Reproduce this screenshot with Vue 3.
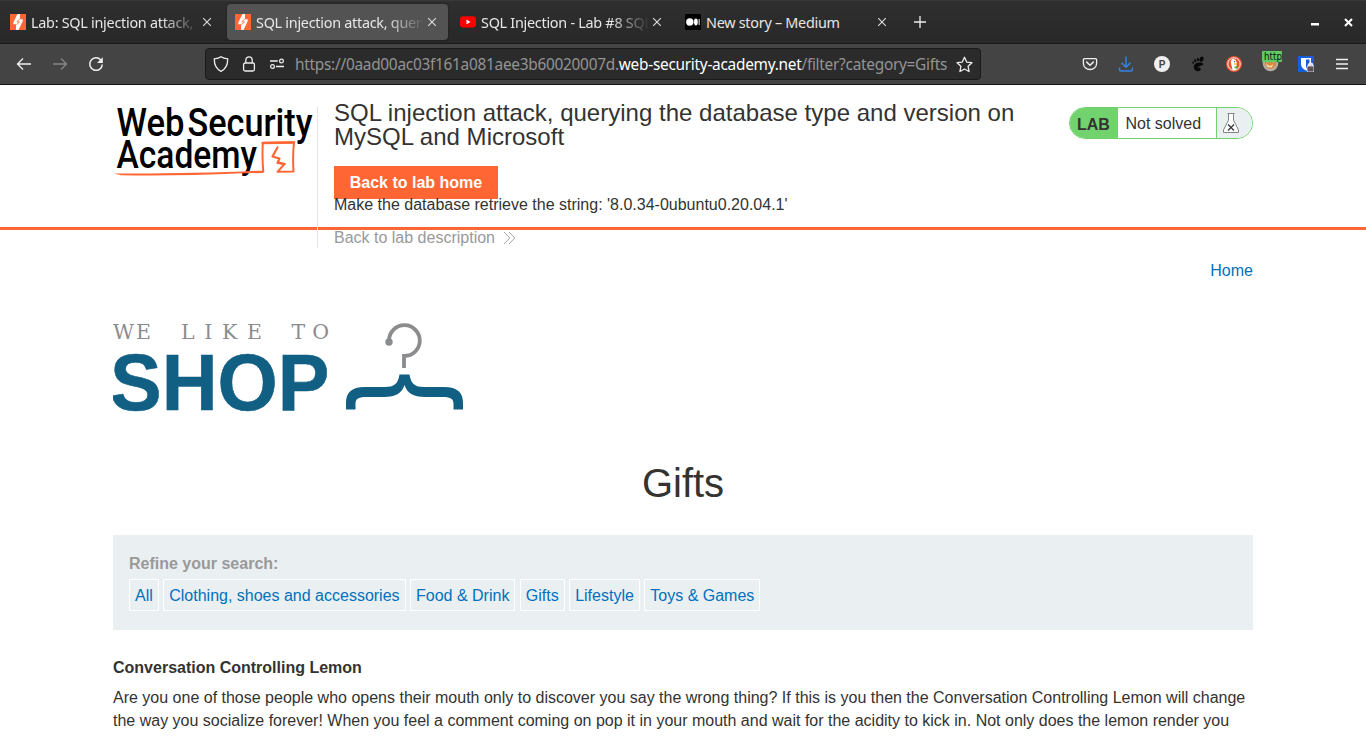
<script setup>
const tabs = [
  { title: 'Lab: SQL injection attack, q', icon: 'burp' },
  { title: 'SQL injection attack, query', icon: 'burp', active: true },
  { title: 'SQL Injection - Lab #8 SQL', icon: 'youtube' },
  { title: 'New story – Medium', icon: 'medium', full: true },
]
const filters = ['All', 'Clothing, shoes and accessories', 'Food & Drink', 'Gifts', 'Lifestyle', 'Toys & Games']
</script>

<template>
  <div class="window">
    <div class="tabbar">
      <div v-for="(t, i) in tabs" :key="i" class="tab" :class="{ active: t.active }">
        <svg class="favicon" viewBox="0 0 16 16" width="16" height="16">
          <template v-if="t.icon === 'burp'">
            <rect width="16" height="16" fill="#ff6633" />
            <path d="M7.500 0H10V5.200H12.700V7.200L8.500 16H6V10.300H3.300V8.500Z" fill="#fff" />
            <path d="M9.800 5L6.800 7.700L9.500 8L6.300 10.600" fill="none" stroke="#ff6633" stroke-width=".8" />
          </template>
          <template v-else-if="t.icon === 'youtube'">
            <rect y="2.300" width="16" height="11.200" rx="3" fill="#f00" />
            <path d="M6.500 5.500L10.600 7.900L6.500 10.300Z" fill="#fff" />
          </template>
          <template v-else>
            <rect width="16" height="16" rx="1" fill="#000" />
            <circle cx="4.800" cy="8" r="3.700" fill="#fff" />
            <ellipse cx="10.900" cy="8" rx="1.900" ry="3.400" fill="#fff" />
            <rect x="13.600" y="5" width="1.100" height="6" fill="#ddd" />
          </template>
        </svg>
        <span class="tab-title" :class="{ full: t.full }">{{ t.title }}</span>
        <svg class="tab-close" viewBox="0 0 10 10" width="10" height="10"><path d="M1.200 1.200L8.800 8.800M8.800 1.200L1.200 8.800" stroke="#dedede" stroke-width="1.100" /></svg>
      </div>
      <svg class="newtab" viewBox="0 0 12 12" width="12" height="12"><path d="M6 0V12M0 6H12" stroke="#eee" stroke-width="1.300" /></svg>
      <div class="wincontrols">
        <svg viewBox="0 0 8 3" width="8" height="3"><rect width="8" height="2.500" fill="#fff" /></svg>
        <svg viewBox="0 0 9 9" width="9" height="9"><path d="M1 1L8 8M8 1L1 8" stroke="#fff" stroke-width="2" /></svg>
      </div>
    </div>

    <div class="toolbar">
      <div class="nav">
        <svg viewBox="0 0 16 16" width="16" height="16"><path d="M15 8H1.500M7 2.500L1.500 8L7 13.500" fill="none" stroke="#f0f0f0" stroke-width="1.300" /></svg>
        <svg viewBox="0 0 16 16" width="16" height="16"><path d="M1 8H14.500M9 2.500L14.500 8L9 13.500" fill="none" stroke="#858585" stroke-width="1.300" /></svg>
        <svg viewBox="0 0 16 16" width="16" height="16"><path d="M12.700 3.800A6.300 6.300 0 1 0 14.300 8.500" fill="none" stroke="#f0f0f0" stroke-width="1.500" /><path d="M14.800 1.200V7H9Z" fill="#f0f0f0" /></svg>
      </div>
      <div class="urlbar">
        <svg viewBox="0 0 16 16" width="16" height="16"><path d="M8 .7C10 2.200 12.500 2.700 14.700 2.900C14.800 8.500 13.400 12.800 8 15.300C2.600 12.800 1.200 8.500 1.300 2.900C3.500 2.700 6 2.200 8 .7Z" fill="none" stroke="#eee" stroke-width="1.300" /></svg>
        <svg viewBox="0 0 16 16" width="16" height="16"><rect x="2.600" y="7" width="10.800" height="8" rx="1.500" fill="none" stroke="#eee" stroke-width="1.300" /><path d="M4.800 7V4A3.200 3.200 0 0 1 11.200 4V7" fill="none" stroke="#eee" stroke-width="1.300" /></svg>
        <svg viewBox="0 0 16 16" width="16" height="16"><path d="M1 5H8.800M7 10.500H15" stroke="#eee" stroke-width="1.300" /><circle cx="12.500" cy="5" r="1.900" fill="none" stroke="#eee" stroke-width="1.200" /><circle cx="3.500" cy="10.500" r="1.900" fill="none" stroke="#eee" stroke-width="1.200" /></svg>
        <span class="url">https://0aad00ac03f161a081aee3b60020007d.<b>web-security-academy.net</b>/filter?category=Gifts</span>
        <svg class="star" viewBox="0 0 16 16" width="17" height="17"><path d="M8 1.200L10.100 5.700L15 6.300L11.400 9.700L12.300 14.600L8 12.200L3.700 14.600L4.600 9.700L1 6.300L5.900 5.700Z" fill="none" stroke="#eee" stroke-width="1.200" stroke-linejoin="round" /></svg>
      </div>
      <div class="exts">
        <svg viewBox="0 0 16 16" width="16" height="16"><path d="M2.500 2.600H13.500Q14.600 2.600 14.600 3.700V7.500A6.600 6 0 0 1 1.400 7.500V3.700Q1.400 2.600 2.500 2.600Z" fill="none" stroke="#eee" stroke-width="1.300" /><path d="M4.700 6.100L8 9.200L11.300 6.100" fill="none" stroke="#eee" stroke-width="1.500" stroke-linecap="round" /></svg>
        <svg viewBox="0 0 16 16" width="16" height="16"><path d="M8 .5V11M3.500 6.800L8 11.200L12.500 6.800M1.500 11.500V13.200Q1.500 15 3.300 15H12.700Q14.500 15 14.500 13.200V11.500" fill="none" stroke="#3584e4" stroke-width="1.400" /></svg>
        <svg viewBox="0 0 16 16" width="16" height="16"><circle cx="8" cy="8" r="8" fill="#f0f0f0" /><text x="8" y="11.600" text-anchor="middle" class="p-letter">P</text></svg>
        <svg viewBox="0 0 16 16" width="16" height="16"><g fill="#080808"><ellipse cx="11.500" cy="3.200" rx="1.900" ry="2.700" transform="rotate(25 11.500 3.200)" /><ellipse cx="7.900" cy="3.500" rx="1.100" ry="1.700" /><ellipse cx="5.200" cy="4.700" rx="1" ry="1.500" transform="rotate(-15 5.200 4.700)" /><ellipse cx="3.100" cy="6.600" rx=".8" ry="1.200" transform="rotate(-25 3.100 6.600)" /><path d="M12.800 7.200C10 5.900 4.800 6.500 4 9.500C3.200 12.500 5.500 15.500 8.300 15.200C10.800 14.900 11.500 12.500 9.800 11.700C8.800 11.200 8.400 12 7.700 12.400C7.300 11 8.700 10.300 10.700 9.700C12.700 9.100 14 8.300 12.800 7.200Z" /></g></svg>
        <svg viewBox="0 0 16 16" width="16" height="16"><circle cx="8" cy="8" r="8" fill="#e8502c" /><circle cx="8" cy="8" r="6.200" fill="none" stroke="#fff" stroke-width="1" /><path d="M6.500 13.500L5 7.500C4.300 4.500 5.500 2.800 7.500 3C9.800 3.200 10.800 5 10.600 7.500L10.200 13.500Q8 14.500 6.500 13.500Z" fill="#fff" /><path d="M8 7.200L11.800 7.600L8.500 9Z" fill="#fdc300" /><path d="M8.500 10.600L11.500 10V12.600L8.500 12.200Z" fill="#4cba3c" /><circle cx="8.600" cy="5.700" r=".6" fill="#345" /></svg>
        <svg class="foxy" viewBox="0 0 20 22" width="20" height="22"><circle cx="8.500" cy="12.500" r="7.800" fill="#b5aca2" /><path d="M2.500 9L5 12L8.500 10.500L12 12L14.500 9Q15 16.500 8.500 18Q2 16.500 2.500 9Z" fill="#d9893f" /><path d="M4 12.500L7.500 15L11.500 13.500L9.500 16.500L5.500 16Z" fill="#f8dcae" /><rect width="20" height="11" rx="1" fill="#5ecb63" /><text x="2" y="9" class="http" textLength="18" lengthAdjust="spacingAndGlyphs">http</text></svg>
        <svg viewBox="0 0 16 16" width="16" height="16"><rect width="16" height="16" rx="1" fill="#175ddc" /><path d="M3 2H13V8Q13 12 8 14.500Q3 12 3 8Z" fill="#fff" /><path d="M8 3.500H11.500V8Q11.500 10.500 8 12.500Z" fill="#175ddc" /><path d="M10.500 11V9.500A2 2 0 0 1 14.500 9.500V11" fill="none" stroke="#eee" stroke-width="1.800" /><rect x="9" y="10" width="7" height="6" rx="1" fill="#555" stroke="#eee" stroke-width=".8" /></svg>
        <svg viewBox="0 0 16 16" width="16" height="16"><path d="M2 3.500H14M2 8H14M2 12.500H14" stroke="#f0f0f0" stroke-width="1.300" /></svg>
      </div>
    </div>

    <main class="page">
      <header class="lab-header">
        <div class="container header-row">
          <svg class="logo" viewBox="0 0 204 80" width="204" height="80">
            <g class="wsa">
              <text x="3.500" y="28.500" textLength="68" lengthAdjust="spacingAndGlyphs">Web</text>
              <text x="74.500" y="28.500" textLength="125" lengthAdjust="spacingAndGlyphs">Security</text>
              <text x="3.500" y="61" textLength="140.500" lengthAdjust="spacingAndGlyphs">Academy</text>
            </g>
            <g fill="none" stroke="#ff6633" stroke-linejoin="round" stroke-linecap="round">
              <path d="M133 65.200L150.300 64.600Q149 50 149.800 36L181 35.200Q179.500 50 180.500 64.500L164.500 64.800L171.500 57L165.500 55.500" stroke-width="2" />
              <path d="M164.500 40.500L159.500 49.500L166.500 51.500L164.500 56L171.500 57" stroke-width="2.200" />
              <path d="M149.800 36L181 35.500" stroke-width="2.600" />
            </g>
            <path d="M1 66.500Q60 66.600 130 64.500L150 64.500V66L130 66.300Q60 69.300 8 68.200Z" fill="#ff6633" />
          </svg>
          <div class="title-container">
            <h2>SQL injection attack, querying the database type and version on MySQL and Microsoft</h2>
            <a class="button">Back to lab home</a>
            <p class="hint">Make the database retrieve the string: '8.0.34-0ubuntu0.20.04.1'</p>
            <a class="link-back">Back to lab description
              <svg viewBox="0 0 13 14" width="13" height="14"><path d="M1 1L6.800 7L1 13M6 1L11.800 7L6 13" fill="none" stroke="#999" stroke-width=".9" /></svg>
            </a>
          </div>
          <div class="status">
            <span class="lab">LAB</span>
            <span class="state">Not solved</span>
            <span class="flask">
              <svg viewBox="0 0 18 22" width="18" height="22"><path d="M5.500 1.500H12.500M6.500 1.500V8L1.500 18V20.500H16.500V18L11.500 8V1.500" fill="#fff" stroke="#858585" stroke-width="1" /><path d="M6 12.500L12 18.500M12 12.500L6 18.500" stroke="#333" stroke-width="1.200" /></svg>
            </span>
          </div>
        </div>
      </header>

      <div class="container content">
        <nav class="top-links"><a>Home</a></nav>
        <svg class="shop" viewBox="0 0 352 92" width="352" height="92">
          <g class="like">
            <text x="0" y="19" textLength="38" lengthAdjust="spacing">WE</text>
            <text x="68" y="19" textLength="81" lengthAdjust="spacing">LIKE</text>
            <text x="178.500" y="19" textLength="37.500" lengthAdjust="spacing">TO</text>
          </g>
          <text class="shop-word" x="-3" y="89.500" textLength="219.500" lengthAdjust="spacingAndGlyphs">SHOP</text>
          <path d="M276 20.500A15.400 15.400 0 1 1 291.200 36H291V48" fill="none" stroke="#8b8c8e" stroke-width="3.800" />
          <circle cx="276" cy="22" r="3.700" fill="#8b8c8e" />
          <path d="M286.500 54.500H296.500C298 64 302 67 311 67H331C345 67 350 73 350 83V89.500H340.500V84C340.500 79 338 77 330 77H312C300 77 294 73 291.500 65C289 73 283 77 271 77H253C245 77 242.500 79 242.500 84V89.500H233V83C233 73 238 67 252 67H272C281 67 285 64 286.500 54.500Z" fill="#125f84" />
        </svg>
        <h1>Gifts</h1>
        <section class="filters">
          <label>Refine your search:</label>
          <div class="filter-row"><a v-for="f in filters" :key="f">{{ f }}</a></div>
        </section>
        <h3>Conversation Controlling Lemon</h3>
        <p class="body-text">Are you one of those people who opens their mouth only to discover you say the wrong thing? If this is you then the Conversation Controlling Lemon will change the way you socialize forever! When you feel a comment coming on pop it in your mouth and wait for the acidity to kick in. Not only does the lemon render you</p>
      </div>
    </main>
  </div>
</template>

<style>
body { margin: 0; overflow: hidden; }
</style>

<style scoped>
.window { width: 1366px; height: 736px; overflow: hidden; background: #fff; font-family: "Liberation Sans", Arial, sans-serif; font-size: 16px; color: #333332; }
.window * { box-sizing: border-box; }
svg { display: block; flex: none; }
.tabbar { height: 44px; display: flex; align-items: center; gap: 4px; padding-left: 2px; background: linear-gradient(#2f2f2f, #282828); border-top: 1px solid #383838; border-bottom: 1px solid #1b1b1b; font: 14.4px "Noto Sans", sans-serif; letter-spacing: -.27px; color: #e6e6e6; }
.tab { width: 221px; height: 36px; display: flex; align-items: center; padding-left: 8px; border-radius: 4px; }
.tab.active { background: #535353; box-shadow: 0 0 2px #1a1a1a; }
.tab-title { width: 167px; margin-left: 5px; padding-top: 2px; white-space: nowrap; overflow: hidden; line-height: 24px; mask-image: linear-gradient(90deg, #000 130px, transparent 169px); }
.tab-title.full { mask-image: none; }
.tab-close { margin-left: 4px; }
.newtab { margin-left: 12px; }
.wincontrols { margin-left: auto; padding-right: 13.500px; display: flex; align-items: center; gap: 25px; }
.wincontrols svg:first-child { margin-top: 5px; }
.toolbar { height: 41px; display: flex; align-items: center; background: #444; border-bottom: 1px solid #141414; }
.nav { width: 205px; padding-left: 16px; display: flex; gap: 20px; }
.urlbar { width: 776px; height: 32px; padding: 0 7px; display: flex; align-items: center; gap: 12px; background: #2b2b2b; border: 1px solid #1a1a1a; border-radius: 4px; }
.url { margin-left: -2px; padding-top: 2px; font: 15.4px/24px "Noto Sans", sans-serif; letter-spacing: -.27px; color: #949494; white-space: nowrap; }
.url b { font-weight: 400; color: #fff; }
.star { margin-left: -3px; }
.exts { margin-left: auto; padding-right: 16px; display: flex; gap: 20px; }
.foxy { margin: -5px -4px -1px 0; }
.p-letter { font: bold 10px "Liberation Sans", sans-serif; fill: #444; }
.http { font: 10px "DejaVu Sans", sans-serif; fill: #111; }
.container { width: 1140px; margin: 0 auto; }
.lab-header { height: 145px; border-bottom: 3px solid #ff6633; }
.header-row { display: flex; align-items: flex-start; }
.logo { margin-top: 22px; }
.wsa text { font: 500 38px Roboto, sans-serif; fill: #000; }
.title-container { width: 720px; height: 141px; margin-top: 22px; padding-left: 16px; border-left: 1px solid #e5e5e5; }
h2 { margin: -6px 0 17px; font-size: 24px; line-height: 24px; font-weight: 400; letter-spacing: .012px; }
.button { display: block; width: 164px; height: 33px; background: #ff6633; color: #fff; font-weight: 700; line-height: 33px; text-align: center; }
.hint { margin: -6px 0 0; line-height: 23px; }
.link-back { display: flex; align-items: center; gap: 8px; margin-top: 10px; line-height: 23px; color: #999; }
.status { width: 184px; height: 32px; margin: 22px 0 0 auto; display: flex; border: 1px solid #72d26d; border-radius: 16px; overflow: hidden; line-height: 32px; }
.lab { width: 48px; padding-left: 7px; background: #72d26d; font-weight: 700; line-height: 33px; }
.state { width: 98px; padding-left: 7.500px; line-height: 31px; }
.flask { flex: 1; padding: 4px 0 0 5px; background: #eaeff2; border-left: 1px solid #72d26d; }
.top-links { height: 23px; margin-top: 29px; text-align: right; line-height: 23px; color: #0071bc; }
.shop { margin-top: 38px; }
.like text { font: 20.5px "DejaVu Serif", serif; fill: #8b8c8e; }
.shop-word { font: bold 80px "Liberation Sans", sans-serif; fill: #125f84; stroke: #125f84; stroke-width: .6px; }
h1 { margin: 48px 0 0; height: 46px; font-size: 40px; line-height: 46px; font-weight: 400; text-align: center; }
.filters { height: 95px; margin-top: 29px; padding: 17px 16px; background: #eaeff2; }
.filters label { display: block; height: 27px; line-height: 23px; font-weight: 700; color: #999; }
.filter-row { display: flex; gap: 4.450px; color: #0071bc; }
.filter-row a { height: 32px; padding: 0 5px; border: 1px solid #fff; line-height: 31px; }
h3 { margin: 26px 0 7px; font-size: 16px; line-height: 23px; }
.body-text { margin: 0; line-height: 23px; }
</style>
